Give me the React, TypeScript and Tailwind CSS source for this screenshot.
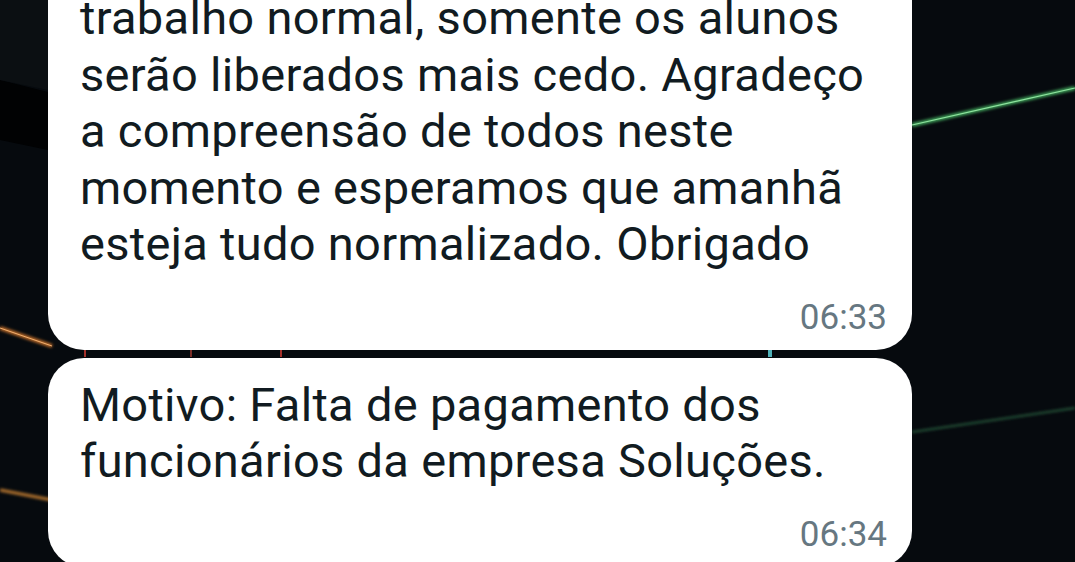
import React from 'react';

const first = [
  'trabalho normal, somente os alunos',
  'serão liberados mais cedo. Agradeço',
  'a compreensão de todos neste',
  'momento e esperamos que amanhã',
  'esteja tudo normalizado. Obrigado',
];

const second = ['Motivo: Falta de pagamento dos', 'funcionários da empresa Soluções.'];

function Wallpaper() {
  return (
    <svg className="absolute inset-0 h-full w-full" viewBox="0 0 1075 562" preserveAspectRatio="none">
      <defs>
        <filter id="glow" x="-20%" y="-20%" width="140%" height="140%">
          <feGaussianBlur stdDeviation="1.6" />
        </filter>
      </defs>
      <rect width="1075" height="562" fill="#060a0e" />
      <path d="M0 80 L48 92 L48 150 L0 140 Z" fill="#010203" />
      <path d="M0 0 L48 0 L48 90 L0 80 Z" fill="#0b0f12" />
      <g filter="url(#glow)">
        <line x1="912" y1="125" x2="1075" y2="88" stroke="#3fa35a" strokeWidth="4" />
        <line x1="912" y1="432" x2="1075" y2="408" stroke="#2f6f48" strokeWidth="1.5" />
        <line x1="0" y1="328" x2="52" y2="346" stroke="#c9722c" strokeWidth="3.5" />
        <line x1="0" y1="490" x2="52" y2="500" stroke="#b9772e" strokeWidth="3" />
      </g>
      <line x1="912" y1="125" x2="1075" y2="88" stroke="#8fe39f" strokeWidth="1.2" />
      <line x1="0" y1="328" x2="52" y2="346" stroke="#f0b070" strokeWidth="1" />
      <rect x="84" y="349" width="2" height="8" fill="#a3302a" />
      <rect x="190" y="349" width="2" height="8" fill="#7a2e28" />
      <rect x="280" y="349" width="2" height="8" fill="#a3302a" />
      <rect x="768" y="349" width="4" height="8" fill="#4fb0b8" />
    </svg>
  );
}

function Bubble({ lines, time, top }: { lines: string[]; time: string; top?: boolean }) {
  return (
    <div
      className={
        'w-[864px] bg-white pl-[32px] pr-[25px] pb-[12px] ' +
        (top ? 'rounded-b-[36px] -mt-[10px]' : 'rounded-[36px] pt-[19px]')
      }
    >
      <div className="text-[47px] leading-[56.5px] text-[#111b21] tracking-[0.3px]">
        {lines.map((l) => (
          <div key={l} className="whitespace-nowrap">
            {l}
          </div>
        ))}
      </div>
      <div className="mt-[25px] text-right text-[35px] leading-[40px] text-[#667781]">{time}</div>
    </div>
  );
}

export default function App() {
  return (
    <div className="relative h-[562px] w-[1075px] overflow-hidden font-['Roboto',sans-serif]">
      <Wallpaper />
      <div className="relative flex flex-col gap-[8px] pl-[48px]">
        <Bubble lines={first} time="06:33" top />
        <Bubble lines={second} time="06:34" />
      </div>
    </div>
  );
}
